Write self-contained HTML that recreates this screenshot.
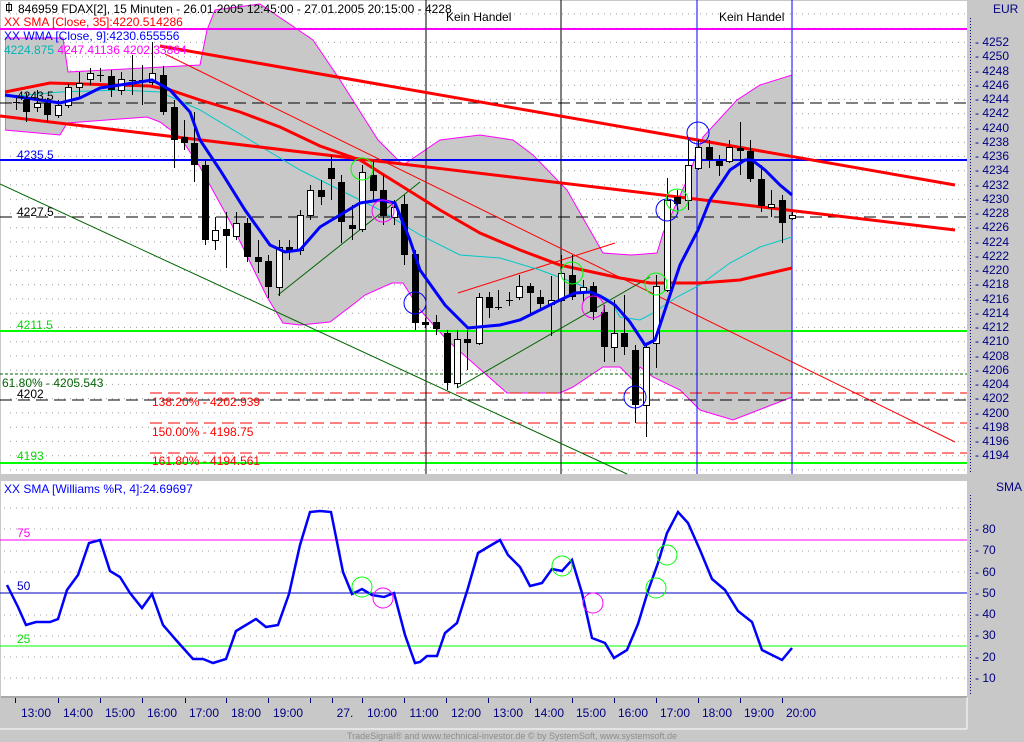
<!DOCTYPE html>
<html><head><meta charset="utf-8"><style>
html,body{margin:0;padding:0;background:#c8c8c8;}
svg{display:block;font-family:"Liberation Sans",sans-serif;}
</style></head><body>
<svg width="1024" height="742" viewBox="0 0 1024 742" xmlns="http://www.w3.org/2000/svg">
<rect x="0" y="0" width="1024" height="742" fill="#c8c8c8"/>
<rect x="1" y="1" width="966" height="473" fill="#fff"/>
<rect x="1" y="481" width="966" height="215" fill="#fff"/>
<line x1="0" y1="729" x2="967" y2="729" stroke="#fff"/>
<line x1="967" y1="697" x2="967" y2="729" stroke="#fff"/>
<line x1="1" y1="697" x2="967" y2="697" stroke="#888"/>

<path stroke="#999" stroke-dasharray="1 5" fill="none" d="M4 13.9H967M4 28.2H967M4 42.4H967M4 56.7H967M4 70.9H967M4 85.2H967M4 99.4H967M4 113.7H967M4 127.9H967M4 142.2H967M4 156.4H967M4 170.7H967M4 184.9H967M4 199.2H967M4 213.4H967M4 227.7H967M4 241.9H967M4 256.2H967M4 270.4H967M4 284.7H967M4 298.9H967M4 313.2H967M4 327.4H967M4 341.7H967M4 355.9H967M4 370.2H967M4 384.4H967M4 398.7H967M4 412.9H967M4 427.2H967M4 441.4H967M4 455.7H967M4 469.9H967"/>

<polygon fill="#c8c8c8" stroke="#ff00ff" stroke-width="1" points="5,38 63,38 68,72 200,65 207,30 215,10 260,4 313,40 340,80 378,140 403,165 440,140 480,135 513,140 533,155 567,190 603,253 631,255 657,253 663,233 687,180 703,137 737,100 760,85 792,75 792,397 733,420 700,410 680,390 653,377 640,367 633,380 620,367 603,367 573,387 560,393 507,393 447,340 420,310 403,283 392,283 365,295 355,303 330,322 300,325 283,323 267,297 233,227 200,167 180,137 160,122 147,117 67,123 60,135 5,130"/>
<rect x="1" y="1" width="4" height="473" fill="#fff"/>

<line x1="0" y1="29" x2="967" y2="29" stroke="#ff00ff" stroke-width="2"/>
<line x1="0" y1="103" x2="967" y2="103" stroke="#000" stroke-dasharray="12 6"/>
<line x1="0" y1="217" x2="967" y2="217" stroke="#000" stroke-dasharray="12 6"/>
<line x1="0" y1="400" x2="967" y2="400" stroke="#000" stroke-dasharray="12 6"/>
<line x1="0" y1="160" x2="967" y2="160" stroke="#0000ff" stroke-width="2"/>
<line x1="0" y1="331" x2="967" y2="331" stroke="#00ff00" stroke-width="2"/>
<line x1="0" y1="463" x2="967" y2="463" stroke="#00ff00" stroke-width="2"/>
<line x1="0" y1="374" x2="967" y2="374" stroke="#006400" stroke-dasharray="3 2"/>
<line x1="150" y1="393" x2="967" y2="393" stroke="#ff0000" stroke-dasharray="12 6"/>
<line x1="150" y1="423" x2="967" y2="423" stroke="#ff0000" stroke-dasharray="12 6"/>
<line x1="150" y1="453" x2="967" y2="453" stroke="#ff0000" stroke-dasharray="12 6"/>

<line x1="426" y1="0" x2="426" y2="474" stroke="#000"/>
<line x1="561" y1="0" x2="561" y2="474" stroke="#000"/>
<line x1="697" y1="0" x2="697" y2="474" stroke="#0000ff"/>
<line x1="792" y1="0" x2="792" y2="474" stroke="#0000ff"/>

<line x1="0" y1="184" x2="627" y2="474" stroke="#006400"/>
<line x1="278" y1="295" x2="420" y2="182" stroke="#006400"/>
<line x1="457" y1="388" x2="650" y2="277" stroke="#006400"/>

<line x1="165" y1="54" x2="955" y2="442" stroke="#ff0000"/>
<line x1="458" y1="293" x2="615" y2="243" stroke="#ff0000"/>

<polyline fill="none" stroke="#00c8c8" points="5,97 60,92 120,90 160,92 200,110 250,140 300,170 340,190 380,210 420,235 460,255 500,258 540,270 580,285 610,300 620,317 640,320 653,313 677,297 700,285 730,263 760,247 792,237"/>

<polyline fill="none" stroke="#ff0000" stroke-width="3" points="5,92 50,83 150,86 170,90 200,100 240,112 280,127 320,146 360,160 400,185 440,210 480,233 520,250 560,265 620,278 650,283 700,283 740,280 792,268"/>
<line x1="160" y1="46" x2="955" y2="185" stroke="#ff0000" stroke-width="3"/>
<line x1="0" y1="116" x2="955" y2="230" stroke="#ff0000" stroke-width="3"/>

<g stroke="#000" stroke-width="1">
<path d="M16.5 95V110M13 102.5H20M26.5 93V122M37.5 90V112M47.5 98V122M58.5 100V118M68.5 84V108M79.5 72V98M90.5 68V85M100.5 68V82M97 75.5H104M111.5 70V97M121.5 72V95M132.5 55V95M129 80.5H136M142.5 65V105M139 80.5H146M152.5 42V85M163.5 66V115M174.5 100V168M184.5 120V150M194.5 112V182M205.5 160V245M215.5 217V250M226.5 212V268M236.5 212V240M247.5 218V262M258.5 240V273M268.5 255V298M279.5 240V296M289.5 240V260M300.5 210V255M310.5 185V220M321.5 180V205M331.5 155V200M341.5 175V243M352.5 205V240M362.5 165V232M373.5 160V200M383.5 175V225M394.5 200V225M404.5 195V265M415.5 250V330M425.5 318V328M436.5 315V335M447.5 330V390M457.5 330V388M467.5 330V370M479.5 293V345M489.5 292V318M498.5 290V310M495 307.5H502M509.5 292V306M506 300.5H513M519.5 275V300M530.5 283V315M540.5 290V310M551.5 276V336M561.5 255V302M572.5 255V300M583.5 280V302M593.5 282V320M604.5 305V362M614.5 300V362M624.5 295V355M635.5 345V423M646.5 343V437M656.5 275V368M667.5 178V292M677.5 190V210M688.5 140V210M698.5 140V170M709.5 140V168M719.5 155V176M729.5 140V163M740.5 122V175M750.5 140V182M761.5 165V212M771.5 190V217M782.5 195V243M792.5 212V220"/>
</g>
<g fill="#000">
<rect x="23" y="100" width="7" height="12"/><rect x="44" y="103" width="7" height="12"/><rect x="108" y="76" width="7" height="14"/><rect x="160" y="75" width="7" height="37"/><rect x="171" y="107" width="7" height="33"/><rect x="181" y="137" width="7" height="6"/><rect x="191" y="143" width="7" height="22"/><rect x="202" y="165" width="7" height="75"/><rect x="223" y="229" width="7" height="7"/><rect x="244" y="223" width="7" height="34"/><rect x="255" y="257" width="7" height="5"/><rect x="265" y="261" width="7" height="26"/><rect x="286" y="247" width="7" height="5"/><rect x="318" y="190" width="7" height="7"/><rect x="328" y="168" width="7" height="11"/><rect x="338" y="182" width="7" height="40"/><rect x="349" y="225" width="7" height="4"/><rect x="370" y="175" width="7" height="16"/><rect x="380" y="190" width="7" height="26"/><rect x="401" y="204" width="7" height="51"/><rect x="412" y="254" width="7" height="69"/><rect x="422" y="322" width="7" height="3"/><rect x="433" y="322" width="7" height="7"/><rect x="444" y="333" width="7" height="50"/><rect x="464" y="339" width="7" height="4"/><rect x="486" y="297" width="7" height="11"/><rect x="527" y="286" width="7" height="7"/><rect x="537" y="297" width="7" height="7"/><rect x="569" y="275" width="7" height="22"/><rect x="590" y="286" width="7" height="26"/><rect x="601" y="312" width="7" height="35"/><rect x="621" y="333" width="7" height="14"/><rect x="632" y="350" width="7" height="55"/><rect x="674" y="197" width="7" height="7"/><rect x="706" y="147" width="7" height="13"/><rect x="716" y="161" width="7" height="5"/><rect x="737" y="148" width="7" height="3"/><rect x="747" y="151" width="7" height="28"/><rect x="758" y="179" width="7" height="27"/><rect x="779" y="200" width="7" height="23"/>
</g>
<g fill="#fff" stroke="#000">
<rect x="34.5" y="103.5" width="6" height="4"/><rect x="55.5" y="105.5" width="6" height="10"/><rect x="65.5" y="87.5" width="6" height="18"/><rect x="76.5" y="83.5" width="6" height="4"/><rect x="87.5" y="73.5" width="6" height="6"/><rect x="118.5" y="79.5" width="6" height="11"/><rect x="149.5" y="73.5" width="6" height="9"/><rect x="212.5" y="230.5" width="6" height="10"/><rect x="233.5" y="223.5" width="6" height="13"/><rect x="276.5" y="247.5" width="6" height="40"/><rect x="297.5" y="215.5" width="6" height="35"/><rect x="307.5" y="190.5" width="6" height="25"/><rect x="359.5" y="172.5" width="6" height="57"/><rect x="391.5" y="207.5" width="6" height="10"/><rect x="454.5" y="339.5" width="6" height="44"/><rect x="476.5" y="297.5" width="6" height="46"/><rect x="516.5" y="286.5" width="6" height="11"/><rect x="548.5" y="300.5" width="6" height="4"/><rect x="558.5" y="273.5" width="6" height="27"/><rect x="580.5" y="287.5" width="6" height="5"/><rect x="611.5" y="333.5" width="6" height="14"/><rect x="643.5" y="347.5" width="6" height="58"/><rect x="653.5" y="286.5" width="6" height="57"/><rect x="664.5" y="200.5" width="6" height="90"/><rect x="685.5" y="165.5" width="6" height="35"/><rect x="695.5" y="147.5" width="6" height="21"/><rect x="726.5" y="147.5" width="6" height="14"/><rect x="768.5" y="204.5" width="6" height="3"/><rect x="789.5" y="215.5" width="6" height="3"/>
</g>

<polyline fill="none" stroke="#0000ff" stroke-width="3" points="5,95 40,100 60,103 80,98 100,88 120,85 140,82 152,80 170,90 190,112 200,140 220,170 245,210 270,245 285,252 300,250 320,227 340,215 360,203 380,200 395,203 410,240 420,270 445,305 468,328 500,325 520,320 540,310 560,300 575,293 590,292 600,296 615,305 630,322 645,345 655,340 665,310 680,265 698,230 710,200 730,170 745,160 752,160 765,170 780,185 792,195"/>

<g fill="none" stroke-width="1">
<circle cx="415" cy="303" r="11" stroke="#0000ff"/><circle cx="635" cy="397" r="11" stroke="#0000ff"/><circle cx="698" cy="133" r="11" stroke="#0000ff"/><circle cx="667" cy="210" r="11" stroke="#0000ff"/>
<circle cx="362" cy="169" r="11" stroke="#00ff00"/><circle cx="572" cy="273" r="11" stroke="#00ff00"/><circle cx="656" cy="284" r="11" stroke="#00ff00"/><circle cx="677" cy="200" r="11" stroke="#00ff00"/>
<circle cx="383" cy="211" r="11" stroke="#ff00ff"/><circle cx="593" cy="307" r="11" stroke="#ff00ff"/>
</g>

<g font-size="12">
<text x="17" y="100" fill="#000">4243.5</text>
<text x="17" y="159" fill="#0000ff">4235.5</text>
<text x="17" y="216" fill="#000">4227.5</text>
<text x="17" y="329" fill="#00dd00">4211.5</text>
<text x="2" y="387" fill="#006400">61.80% - 4205.543</text>
<text x="17" y="398" fill="#000">4202</text>
<text x="152" y="406" fill="#ff0000">138.20% - 4202.939</text>
<text x="152" y="436" fill="#ff0000">150.00% - 4198.75</text>
<text x="152" y="465" fill="#ff0000">161.80% - 4194.561</text>
<text x="17" y="460" fill="#00dd00">4193</text>
<text x="446" y="21" fill="#000">Kein Handel</text>
<text x="719" y="21" fill="#000">Kein Handel</text>
<text x="18" y="13" fill="#000">846959  FDAX[2], 15 Minuten - 26.01.2005 12:45:00 - 27.01.2005 20:15:00 - 4228</text>
<text x="4" y="26" fill="#ff0000">XX SMA [Close, 35]:4220.514286</text>
<text x="4" y="40" fill="#0000ff">XX WMA [Close, 9]:4230.655556</text>
<text x="4" y="54" fill="#00b4b4">4224.875 <tspan fill="#ff00ff">4247.41136 4202.33864</tspan></text>
</g>
<g stroke="#000" fill="none"><rect x="6.5" y="4.5" width="5" height="6"/><line x1="9" y1="2" x2="9" y2="13"/></g>

<line x1="970.5" y1="18" x2="970.5" y2="474" stroke="#000080" stroke-dasharray="1 2"/>
<g font-size="12" fill="#000080">
<text x="993" y="13">EUR</text>
<text x="975" y="46">- 4252</text><text x="975" y="60">- 4250</text><text x="975" y="75">- 4248</text><text x="975" y="89">- 4246</text><text x="975" y="103">- 4244</text><text x="975" y="117">- 4242</text><text x="975" y="132">- 4240</text><text x="975" y="146">- 4238</text><text x="975" y="160">- 4236</text><text x="975" y="174">- 4234</text><text x="975" y="189">- 4232</text><text x="975" y="203">- 4230</text><text x="975" y="217">- 4228</text><text x="975" y="231">- 4226</text><text x="975" y="246">- 4224</text><text x="975" y="260">- 4222</text><text x="975" y="274">- 4220</text><text x="975" y="288">- 4218</text><text x="975" y="303">- 4216</text><text x="975" y="317">- 4214</text><text x="975" y="331">- 4212</text><text x="975" y="345">- 4210</text><text x="975" y="360">- 4208</text><text x="975" y="374">- 4206</text><text x="975" y="388">- 4204</text><text x="975" y="402">- 4202</text><text x="975" y="417">- 4200</text><text x="975" y="431">- 4198</text><text x="975" y="445">- 4196</text><text x="975" y="459">- 4194</text>
</g>

<path stroke="#999" stroke-dasharray="1 5" fill="none" d="M4 508H967M4 529H967M4 551H967M4 572H967M4 615H967M4 636H967M4 657H967M4 678H967"/>
<line x1="0" y1="540" x2="967" y2="540" stroke="#ff00ff"/>
<line x1="0" y1="593" x2="967" y2="593" stroke="#0000c0"/>
<line x1="0" y1="646" x2="967" y2="646" stroke="#00ff00"/>
<polyline fill="none" stroke="#0000ff" stroke-width="2.5" points="7,585 12,595 18,607 26,625 36,622 50,622 58,619 67,590 78,575 89,543 100,540 110,571 120,577 130,593 142,608 152,594 163,625 176,640 193,659 203,659 213,663 226,659 236,631 246,625 256,619 266,627 278,625 289,594 300,545 310,512 320,511 331,512 343,572 352,594 362,589 372,595 384,597 394,593 405,635 415,663 420,662 427,656 437,656 445,633 457,623 468,588 478,553 488,547 500,540 508,555 520,567 530,586 542,583 552,569 562,571 572,560 582,593 592,638 605,643 614,658 627,650 638,624 648,591 658,563 667,533 678,512 688,523 700,550 712,579 725,590 738,611 752,622 762,650 782,660 792,648"/>
<g fill="none">
<circle cx="362" cy="587" r="10" stroke="#00ff00"/><circle cx="383" cy="598" r="10" stroke="#ff00ff"/><circle cx="562" cy="566" r="10" stroke="#00ff00"/><circle cx="593" cy="603" r="10" stroke="#ff00ff"/><circle cx="656" cy="588" r="10" stroke="#00ff00"/><circle cx="667" cy="555" r="10" stroke="#00ff00"/>
</g>
<g font-size="12">
<text x="4" y="493" fill="#0000ff">XX SMA [Williams %R, 4]:24.69697</text>
<text x="17" y="537" fill="#ff00ff">75</text>
<text x="17" y="590" fill="#0000c0">50</text>
<text x="17" y="643" fill="#00dd00">25</text>
</g>
<line x1="970.5" y1="495" x2="970.5" y2="696" stroke="#000080" stroke-dasharray="1 2"/>
<g font-size="12" fill="#000080">
<text x="996" y="491">SMA</text>
<text x="975" y="533">- 80</text><text x="975" y="554">- 70</text><text x="975" y="576">- 60</text><text x="975" y="597">- 50</text><text x="975" y="618">- 40</text><text x="975" y="639">- 30</text><text x="975" y="661">- 20</text><text x="975" y="682">- 10</text>
</g>

<path stroke="#000080" d="M15.5 698V703M58.5 698V703M100.5 698V703M142.5 698V703M185.5 698V703M226.5 698V703M268.5 698V703M310.5 698V703M332.5 698V703M362.5 698V703M404.5 698V703M446.5 698V703M488.5 698V703M530.5 698V703M572.5 698V703M614.5 698V703M656.5 698V703M698.5 698V703M740.5 698V703M782.5 698V703"/>
<g font-size="12" fill="#000080" text-anchor="middle">
<text x="36" y="717">13:00</text><text x="78" y="717">14:00</text><text x="120" y="717">15:00</text><text x="162" y="717">16:00</text><text x="204" y="717">17:00</text><text x="246" y="717">18:00</text><text x="288" y="717">19:00</text><text x="345" y="717">27.</text><text x="382" y="717">10:00</text><text x="424" y="717">11:00</text><text x="466" y="717">12:00</text><text x="508" y="717">13:00</text><text x="549" y="717">14:00</text><text x="591" y="717">15:00</text><text x="633" y="717">16:00</text><text x="675" y="717">17:00</text><text x="717" y="717">18:00</text><text x="759" y="717">19:00</text><text x="801" y="717">20:00</text>
</g>
<text x="512" y="739" font-size="9" fill="#8c8c8c" text-anchor="middle">TradeSignal® and www.technical-investor.de © by SystemSoft, www.systemsoft.de</text>
</svg>
</body></html>
